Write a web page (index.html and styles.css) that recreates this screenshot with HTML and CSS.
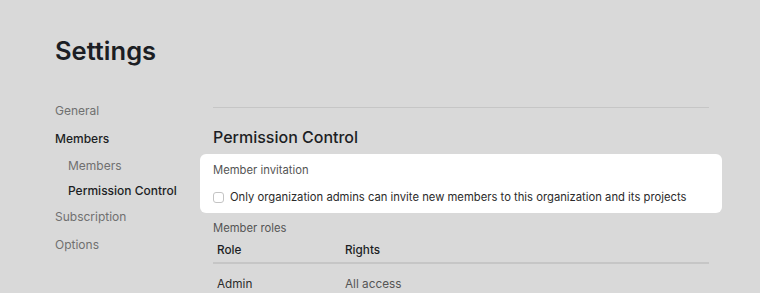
FILE: index.html
```html
<!DOCTYPE html>
<html lang="en">
<head>
    <meta charset="UTF-8">
    <title>Settings</title>
    <link rel="stylesheet" href="styles.css">
</head>
<body>
    <div class="page">
        <h1 class="page-title">Settings</h1>
        <div class="layout">
            <!-- Sidebar -->
            <nav class="sidebar">
                <a class="nav-item">General</a>
                <a class="nav-item active">Members</a>
                <a class="nav-sub">Members</a>
                <a class="nav-sub active">Permission Control</a>
                <a class="nav-item">Subscription</a>
                <a class="nav-item">Options</a>
            </nav>

            <!-- Content -->
            <main class="content">
                <div class="divider"></div>
                <h2 class="section-title">Permission Control</h2>

                <div class="card">
                    <div class="group-label">Member invitation</div>
                    <label class="check-row">
                        <span class="checkbox"></span>
                        Only organization admins can invite new members to this organization and its projects
                    </label>
                </div>

                <div class="group-label roles-label">Member roles</div>
                <table class="roles">
                    <thead>
                        <tr>
                            <th class="col-role">Role</th>
                            <th>Rights</th>
                        </tr>
                    </thead>
                    <tbody>
                        <tr>
                            <td>Admin</td>
                            <td class="muted">All access</td>
                        </tr>
                    </tbody>
                </table>
            </main>
        </div>
    </div>
</body>
</html>
```

FILE: styles.css
```css
:root {
    --bg: #d9d9d9;
    --dark: #1c1e24;
    --text: #2b2b2b;
    --muted: #707070;
    --line: #c6c6c6;
}

* {
    box-sizing: border-box;
    margin: 0;
    padding: 0;
}

body {
    background: var(--bg);
    color: var(--text);
    font-family: 'Inter', 'Noto Sans', sans-serif;
}

.page {
    padding: 36px 0 0 55px;
}

.page-title {
    font-size: 25.5px;
    font-weight: 600;
    line-height: 30px;
    color: var(--dark);
}

.layout {
    display: flex;
    margin-top: 31px;
}

/* Sidebar */
.sidebar {
    width: 158px;
    display: flex;
    flex-direction: column;
    font-size: 12px;
}

.nav-item {
    line-height: 28px;
    color: var(--muted);
}

.nav-sub {
    line-height: 25px;
    padding-left: 13px;
    color: var(--muted);
}

.nav-item.active,
.nav-sub.active {
    color: var(--dark);
    font-weight: 500;
}

/* Content */
.content {
    width: 496px;
}

.divider {
    margin-top: 10px;
    border-top: 1px solid var(--line);
}

.section-title {
    margin-top: 17px;
    margin-bottom: 5px;
    font-size: 16px;
    font-weight: 500;
    line-height: 24px;
    color: var(--dark);
}

.card {
    margin: 0 -13px;
    padding: 8px 13px 7px;
    background: white;
    border-radius: 6px;
}

.group-label {
    font-size: 11.25px;
    line-height: 16px;
    color: #555;
}

.check-row {
    display: flex;
    align-items: center;
    gap: 6px;
    margin-top: 10px;
    font-size: 11.25px;
    line-height: 18px;
    color: var(--text);
}

.checkbox {
    width: 11px;
    height: 11px;
    border: 1px solid #c4c4c4;
    border-radius: 3px;
    background: white;
}

.roles-label {
    margin-top: 7px;
}

.roles {
    width: 100%;
    margin-top: 2px;
    border-collapse: collapse;
    font-size: 11.75px;
}

.roles th {
    text-align: left;
    font-weight: 500;
    line-height: 18px;
    padding: 3px 4px;
    color: var(--dark);
    border-bottom: 2px solid var(--line);
}

.roles .col-role {
    width: 128px;
}

.roles td {
    padding: 11px 4px;
    line-height: 18px;
    color: var(--text);
}

.roles td.muted {
    color: #555;
}
```
